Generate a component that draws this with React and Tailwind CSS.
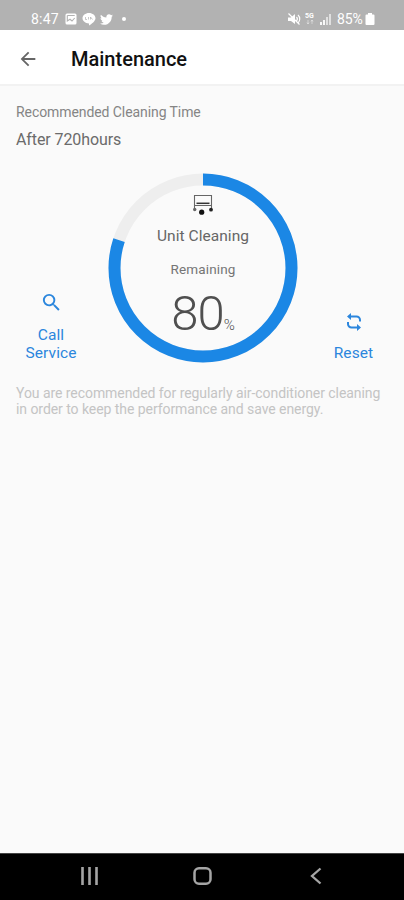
import React from "react";
import { FaTwitter } from "react-icons/fa";
import { MdArrowBack, MdSearch } from "react-icons/md";

const StatusBar = () => (
  <div className="h-[30px] bg-[#b2b2b2] text-white flex items-end justify-between pl-[31px] pr-[29px] pb-[3px] shrink-0">
    <div className="flex items-center h-4">
      <span className="text-sm leading-4 w-[34px] tracking-[0.2px]">8:47</span>
      {/* Gallery */}
      <svg width="12" height="12" viewBox="0 0 12 12">
        <rect x="0.5" y="0.5" width="11" height="11" rx="1.5" fill="#fff" />
        <path d="M2.300 2.500H9.700M2.300 2.500V8L5 6.300 7 8 9.700 5" stroke="#b2b2b2" strokeWidth="1.100" fill="none" />
      </svg>
      {/* Chat */}
      <svg className="ml-[5px]" width="14" height="14" viewBox="0 0 14 14">
        <path d="M7 1c3.600 0 6.500 2.300 6.500 5.200C13.500 9 9.500 12 7 13.500V11.400C3.400 11.300 .5 9 .5 6.200.5 3.300 3.400 1 7 1z" fill="#fff" />
        <path d="M3.500 5v2.500H5M6.500 5v2.500M8.500 7.500V5l2 2.500" fill="none" stroke="#b2b2b2" strokeWidth="0.700" />
      </svg>
      <FaTwitter className="ml-1" size={13} />
      <span className="ml-[9px] size-1 rounded-full bg-white" />
    </div>
    <div className="flex items-center h-4">
      {/* Muted */}
      <svg width="14" height="14" viewBox="0 0 14 14" fill="none">
        <path d="M1 5.500h3L8 2v10L4 9H1z" fill="#fff" />
        <path d="M9.500 5a3 3 0 0 1 0 4M11 3a5.500 5.500 0 0 1 0 8M1.500 1.500L12.500 12.500" stroke="#fff" strokeWidth="1.200" />
      </svg>
      <svg className="ml-1" width="10" height="14" viewBox="0 0 10 14">
        <text x="0" y="6" fontSize="7" fontWeight="700" fill="#fff">5G</text>
        <path d="M3 8v4M2 10.500l1 1.500 1-1.500M7 12V8M6 9.500L7 8l1 1.500" stroke="#fff" strokeWidth="0.700" fill="none" opacity="0.600" />
      </svg>
      <svg className="ml-[5px]" width="11" height="12" viewBox="0 0 11 12">
        <path d="M0 9h2v3H0zM3 7h2v5H3z" fill="#fff" opacity="0.900" />
        <path d="M6 4h2v8H6zM9 1h2v11H9z" fill="#fff" opacity="0.600" />
      </svg>
      <span className="ml-[6px] text-sm leading-4 w-[28px] tracking-[-0.1px]">85%</span>
      <svg width="10" height="12" viewBox="0 0 10 12">
        <path d="M3 0h4v1.500h1.500a1 1 0 0 1 1 1V11a1 1 0 0 1-1 1h-7a1 1 0 0 1-1-1V2.500a1 1 0 0 1 1-1H3z" fill="#fff" />
      </svg>
    </div>
  </div>
);

const UnitIcon = () => (
  <svg width="20" height="22" viewBox="0 0 20 22" fill="none">
    <path d="M1.500 14V1.500H18.500V14M1.500 11.500H18.500" stroke="#666" strokeWidth="1.100" />
    <path d="M3.500 9.300H16.500" stroke="#333" strokeWidth="1.500" />
    <circle cx="1.700" cy="15.500" r="1.700" fill="#666" />
    <circle cx="18" cy="15.700" r="1.900" fill="#222" />
    <circle cx="8.700" cy="18.200" r="2.600" fill="#111" />
  </svg>
);

const Gauge = ({ value }) => {
  const radius = 88.500;
  const length = 2 * Math.PI * radius;

  return (
    <div className="relative size-[190px] flex flex-col items-center shrink-0">
      <svg className="absolute inset-0 -rotate-90" width="190" height="190" viewBox="0 0 190 190" fill="none">
        <circle cx="95" cy="95" r={radius} stroke="#eeeeee" strokeWidth="12" />
        <circle
          cx="95"
          cy="95"
          r={radius}
          stroke="#1b87e5"
          strokeWidth="12"
          strokeDasharray={`${(length * value) / 100} ${length}`}
        />
      </svg>
      <div className="mt-[21px]">
        <UnitIcon />
      </div>
      <p className="mt-[10px] text-[15.500px] leading-5 text-[#666] tracking-[0.05px]">Unit Cleaning</p>
      <p className="mt-[14px] text-[13.500px] leading-[18px] text-[#757575] tracking-[0.150px]">Remaining</p>
      <p className="mt-[12px] flex items-baseline font-light text-[#4f4f4f]">
        <span className="text-[49px] leading-[48px] tracking-[-1px]">{value}</span>
        <span className="text-[15px]">%</span>
      </p>
    </div>
  );
};

const App = () => {
  return (
    <div className="h-screen flex flex-col bg-[#fafafa] font-['Roboto',sans-serif]">
      <StatusBar />

      {/* Header */}
      <header className="h-[56px] pt-[3px] bg-white border-b-2 border-[#f2f2f2] flex items-center shrink-0 pl-[17px]">
        <MdArrowBack size={22} color="#666" />
        <h1 className="ml-8 text-xl font-medium text-[#111]">Maintenance</h1>
      </header>

      <main className="flex-1 pt-4">
        <div className="px-4">
          <p className="text-sm text-[#858585] tracking-[-0.08px]">Recommended Cleaning Time</p>
          <p className="mt-2 text-base leading-5 text-[#6b6b6b] tracking-[-0.1px]">After 720hours</p>
        </div>

        {/* Gauge and actions */}
        <div className="mt-[23px] flex items-end">
          <button className="w-[102px] mr-[6px] mb-px flex flex-col items-center text-[#2b86dd] text-[15.500px] leading-[18px]">
            <MdSearch size={23} />
            <span className="mt-3 w-[60px] tracking-[0.1px]">Call Service</span>
          </button>
          <Gauge value={80} />
          <button className="flex-1 pl-[5px] mb-px flex flex-col items-center text-[#2b86dd] text-[15.500px] leading-[18px]">
            <svg width="16" height="20" viewBox="0 0 16 20" fill="none" stroke="currentColor" strokeWidth="2">
              <path d="M5 4.500h5.500a3.500 3.500 0 0 1 3.500 3.500v1.500M11 15.500H5.500A3.500 3.500 0 0 1 2 12v-2" />
              <path d="M5 1v7L1 4.500zM11 12v7l4-3.500z" fill="currentColor" stroke="none" />
            </svg>
            <span className="mt-3 tracking-[0.1px]">Reset</span>
          </button>
        </div>

        <p className="mt-[22px] pl-4 text-sm leading-4 text-[#c4c4c4] tracking-[-0.06px] whitespace-nowrap">
          You are recommended for regularly air-conditioner cleaning
          <br />
          in order to keep the performance and save energy.
        </p>
      </main>

      {/* Navigation bar */}
      <nav className="h-[47px] pb-0.5 bg-black border-t border-[#444] shrink-0 flex items-center">
        <svg className="ml-[81px]" width="17" height="18" viewBox="0 0 17 18">
          <path d="M1.500 0v18M8.500 0v18M15.500 0v18" stroke="#a5a5a5" strokeWidth="2.600" />
        </svg>
        <svg className="ml-[95px]" width="19" height="18" viewBox="0 0 19 18" fill="none">
          <rect x="1.500" y="1.300" width="16" height="15.400" rx="4.500" stroke="#a5a5a5" strokeWidth="2.500" />
        </svg>
        <svg className="ml-[98px]" width="12" height="18" viewBox="0 0 12 18" fill="none">
          <path d="M10.500 1.500L2 9l8.500 7.500" stroke="#a5a5a5" strokeWidth="2.300" />
        </svg>
      </nav>
    </div>
  );
};

export default App;
